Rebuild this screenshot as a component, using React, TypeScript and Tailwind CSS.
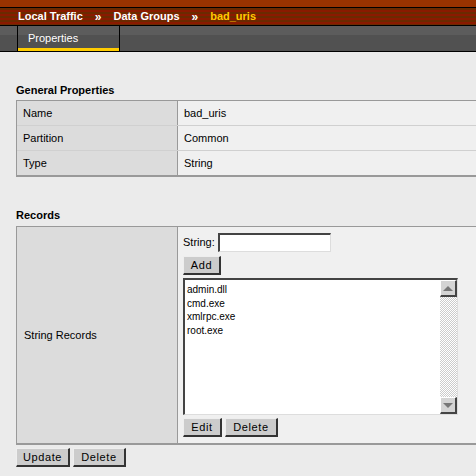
export default function App() {
  const btn =
    "h-[19px] bg-[#cccccc] border-t border-l border-t-[#eeeeee] border-l-[#eeeeee] border-r-2 border-b-2 border-r-[#333333] border-b-[#333333] text-[11px] text-black tracking-[0.6px] leading-none";
  const sunken =
    "bg-white border-t-2 border-l-2 border-t-[#444444] border-l-[#444444] border-r border-b border-r-[#dddddd] border-b-[#dddddd]";

  return (
    <div className="w-[476px] h-[476px] overflow-hidden bg-[#ebebeb] font-['Liberation_Sans',Arial,sans-serif] text-black">
      {/* header */}
      <div className="h-[7px] bg-[#993300]" />
      <div className="h-[1px] bg-black" />
      <div className="h-[17px] bg-[repeating-linear-gradient(180deg,#6b2a00_0px,#6b2a00_2px,#8a1a00_2px,#8a1a00_4px)] flex items-center pl-[18px] text-[11px] font-bold text-white leading-none">
        <span>Local Traffic</span>
        <span className="px-[12px] text-[12px]">»</span>
        <span>Data Groups</span>
        <span className="px-[12px] text-[12px]">»</span>
        <span className="text-[#ffcc00]">bad_uris</span>
      </div>
      <div className="h-[1px] bg-black" />
      {/* tabs */}
      <div className="h-[25px] bg-[linear-gradient(180deg,#5c5c5c_0px,#5c5c5c_9px,#515151_9px)] flex">
        <div className="w-[18px] border-r border-black" />
        <div className="w-[102px] border-r border-black flex flex-col">
          <div className="flex-1 pl-[10px] pt-[6px] text-[11px] leading-[13px] text-white">Properties</div>
          <div className="h-[3px] bg-[#ffcc00]" />
        </div>
      </div>
      <div className="h-[1px] bg-black" />

      <div className="pl-[16px] pt-[32px]">
        <div className="text-[11px] font-bold leading-[13px] mb-[3px]">General Properties</div>
        <div className="border-l border-b-2 border-[#999999] text-[11px]">
          {[
            ["Name", "bad_uris"],
            ["Partition", "Common"],
            ["Type", "String"],
          ].map(([k, v], i) => (
            <div key={k} className={`flex h-[25px] border-t ${i > 0 ? "border-[#d0d0d0]" : "border-[#999999]"}`}>
              <div className="w-[161px] bg-[#dcdcdc] border-r border-[#999999] pl-[6px] flex items-center">{k}</div>
              <div className="flex-1 bg-[#f0f0f0] pl-[6px] flex items-center">{v}</div>
            </div>
          ))}
        </div>

        <div className="text-[11px] font-bold leading-[13px] mt-[32px] mb-[4px]">Records</div>
        <div className="flex border-t border-l border-b-2 border-[#999999] text-[11px] h-[219px]">
          <div className="w-[161px] bg-[#dcdcdc] border-r border-[#999999] pl-[7px] flex items-center">String Records</div>
          <div className="flex-1 bg-[#f0f0f0] pl-[5px] pt-[6px] flex flex-col">
            <div className="flex items-center gap-[3px] h-[19px]">
              <span>String:</span>
              <div className={`w-[113px] h-[19px] ${sunken}`} />
            </div>
            <div className="mt-[4px] h-[19px]">
              <button className={`${btn} w-[38px]`}>Add</button>
            </div>
            <div className={`mt-[3px] w-[275px] h-[137px] flex ${sunken}`}>
              <div className="flex-1 pl-[2px] pt-[3px] leading-[13.5px] text-[10px]">
                <div>admin.dll</div>
                <div>cmd.exe</div>
                <div>xmlrpc.exe</div>
                <div>root.exe</div>
              </div>
              <div className="w-[17px] flex flex-col bg-[repeating-conic-gradient(#cccccc_0%_25%,#ffffff_0%_50%)] bg-[length:2px_2px]">
                <div className="h-[17px] bg-[#d4d4d4] border-t border-l border-white border-r-2 border-b-2 border-r-[#444444] border-b-[#444444] flex items-center justify-center">
                  <div className="w-0 h-0 border-l-[5px] border-r-[5px] border-b-[5px] border-l-transparent border-r-transparent border-b-[#777777]" />
                </div>
                <div className="flex-1" />
                <div className="h-[17px] bg-[#d4d4d4] border-t border-l border-white border-r-2 border-b-2 border-r-[#444444] border-b-[#444444] flex items-center justify-center">
                  <div className="w-0 h-0 border-l-[5px] border-r-[5px] border-t-[5px] border-l-transparent border-r-transparent border-t-[#777777]" />
                </div>
              </div>
            </div>
            <div className="mt-[3px] flex gap-[3px]">
              <button className={`${btn} w-[39px]`}>Edit</button>
              <button className={`${btn} w-[53px]`}>Delete</button>
            </div>
          </div>
        </div>

        <div className="mt-[3px] flex gap-[3px]">
          <button className={`${btn} w-[54px]`}>Update</button>
          <button className={`${btn} w-[53px]`}>Delete</button>
        </div>
      </div>
    </div>
  );
}
